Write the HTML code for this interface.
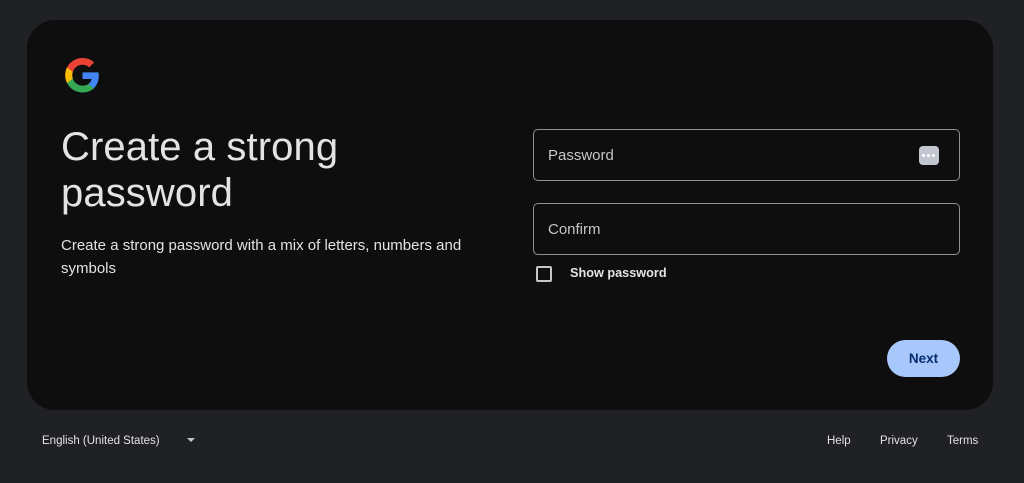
<!DOCTYPE html>
<html><head><meta charset="utf-8"><style>
*{margin:0;padding:0;box-sizing:border-box}
body{width:1024px;height:483px;background:#202124;font-family:"Liberation Sans",sans-serif;position:relative;overflow:hidden;color:#e3e3e3}
.card{position:absolute;left:27px;top:20px;width:966px;height:390px;background:#0e0e0e;border-radius:28px}
.logo{position:absolute;left:64px;top:57px}
h1{position:absolute;left:61px;top:124px;font-weight:400;font-size:40px;line-height:46px;color:#e3e3e3;letter-spacing:0.1px}
.sub{position:absolute;left:61px;top:234px;font-size:15px;line-height:23px;color:#e3e3e3;width:430px}
.inp{position:absolute;left:533px;width:427px;height:52px;border:1px solid #8e918f;border-radius:5px}
.inp span{position:absolute;left:14px;top:17px;font-size:15px;color:#c4c7c5}
.key{position:absolute;right:20px;top:16px;width:20px;height:19px;background:#c2c6d0;border-radius:4px}
.key i{position:absolute;top:8px;width:3px;height:3px;background:#fff;border-radius:50%}
.cb{position:absolute;left:536px;top:266px;width:16px;height:16px;border:2px solid #c4c7c5;border-radius:2px}
.sp{position:absolute;left:570px;top:266px;font-size:12.7px;font-weight:bold;color:#e3e3e3}
.btn{position:absolute;left:887px;top:340px;width:73px;height:37px;background:#a8c7fa;border-radius:19px;color:#062e6f;font-size:13.5px;font-weight:bold;text-align:center;line-height:37px}
.ft{position:absolute;top:435px;font-size:11.5px;color:#e3e3e3}
</style></head><body>
<div class="card"></div>
<svg class="logo" width="37" height="37" viewBox="0 0 48 48">
<path fill="#4285F4" d="M45.1 24.5c0-1.6-.1-3.1-.4-4.5H24v8.5h11.8c-.5 2.7-2.1 5-4.5 6.6v5.5h7.3c4.2-3.9 6.5-9.6 6.5-16.1z"/>
<path fill="#34A853" d="M24 46c6.1 0 11.2-2 14.9-5.5l-7.3-5.5c-2 1.4-4.6 2.2-7.6 2.2-5.9 0-10.8-4-12.6-9.3H3.9v5.8C7.6 41.1 15.2 46 24 46z"/>
<path fill="#FBBC05" d="M11.4 27.9c-.4-1.4-.7-2.8-.7-4.3s.3-3 .7-4.3v-5.8H3.9C2.4 16.5 1.5 20 1.5 23.6s.9 7.1 2.4 10.1l7.5-5.8z"/>
<path fill="#EA4335" d="M24 10.1c3.300 0 6.3 1.1 8.6 3.4l6.5-6.5C35.2 3.4 30.1 1.3 24 1.3 15.2 1.3 7.6 6.2 3.9 13.5l7.5 5.8c1.8-5.3 6.7-9.2 12.6-9.2z"/>
</svg>
<h1>Create a strong<br>password</h1>
<div class="sub">Create a strong password with a mix of letters, numbers and symbols</div>
<div class="inp" style="top:129px"><span>Password</span><div class="key"><i style="left:3px"></i><i style="left:8px"></i><i style="left:13px"></i></div></div>
<div class="inp" style="top:203px"><span>Confirm</span></div>
<div class="cb"></div>
<div class="sp">Show password</div>
<div class="btn">Next</div>
<div class="ft" style="left:42px">English (United States)</div>
<div class="ft" style="left:187px;top:438px;width:0;height:0;border-left:4px solid transparent;border-right:4px solid transparent;border-top:4px solid #c4c7c5"></div>
<div class="ft" style="left:827px">Help</div>
<div class="ft" style="left:880px">Privacy</div>
<div class="ft" style="left:947px">Terms</div>
</body></html>
